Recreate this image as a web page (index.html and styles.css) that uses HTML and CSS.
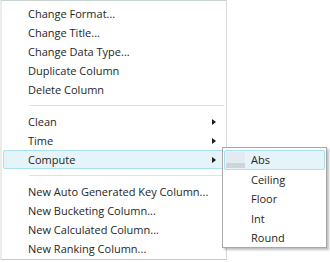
FILE: index.html
```html
<!DOCTYPE html>
<html lang="en">
<head>
    <meta charset="UTF-8">
    <title>Column menu</title>
    <link rel="stylesheet" href="styles.css">
</head>
<body>
    <div class="stage">
        <div class="menu">
            <div class="item">Change Format...</div>
            <div class="item">Change Title...</div>
            <div class="item">Change Data Type...</div>
            <div class="item">Duplicate Column</div>
            <div class="item">Delete Column</div>
            <div class="sep"></div>
            <div class="item has-sub">Clean<span class="arrow"></span></div>
            <div class="item has-sub">Time<span class="arrow"></span></div>
            <div class="item has-sub active">Compute<span class="arrow"></span></div>
            <div class="sep"></div>
            <div class="item">New Auto Generated Key Column...</div>
            <div class="item">New Bucketing Column...</div>
            <div class="item">New Calculated Column...</div>
            <div class="item">New Ranking Column...</div>
        </div>

        <div class="submenu">
            <div class="sub-item active"><span class="icon-slot"></span>Abs</div>
            <div class="sub-item"><span class="icon-slot"></span>Ceiling</div>
            <div class="sub-item"><span class="icon-slot"></span>Floor</div>
            <div class="sub-item"><span class="icon-slot"></span>Int</div>
            <div class="sub-item"><span class="icon-slot"></span>Round</div>
        </div>
    </div>
</body>
</html>
```

FILE: styles.css
```css
body {
    margin: 0;
    background-color: #fff;
    font-family: "Open Sans", "Noto Sans", sans-serif;
    font-size: 11px;
    color: #262626;
}
.stage {
    position: relative;
    width: 330px;
    height: 262px;
}
.menu {
    width: 224px;
    height: 255px;
    padding-top: 3px;
    background-color: #fff;
    border-top: 1px solid #c9d3d0;
    border-right: 1px solid #dadada;
    border-bottom: 1px solid #c8c8c8;
    border-left: 2px solid #ececec;
}
.item {
    position: relative;
    height: 19px;
    line-height: 19px;
    padding-left: 25px;
    margin: 0 2px 0 1px;
    white-space: nowrap;
}
.item.active {
    background-color: #e5f4f8;
    border: 1px solid #a9dfee;
    border-radius: 2px;
    height: 17px;
    line-height: 17px;
    padding-left: 24px;
}
.arrow {
    position: absolute;
    right: 8px;
    top: 7px;
    width: 0;
    height: 0;
    border-top: 3px solid transparent;
    border-bottom: 3px solid transparent;
    border-left: 4px solid #1b1b1b;
}
.item.active .arrow {
    top: 6px;
    right: 7px;
}
.sep {
    height: 1px;
    margin: 6px 2px 6px 27px;
    background-color: #e2e2e2;
}
.submenu {
    position: absolute;
    left: 222px;
    top: 147px;
    width: 103px;
    height: 97px;
    padding-top: 2px;
    background-color: #fff;
    border: 1px solid #a8a8a8;
    box-shadow: 2px 2px 2px rgba(0, 0, 0, 0.25);
}
.sub-item {
    display: flex;
    align-items: center;
    height: 19.5px;
    margin: 0 2px;
    white-space: nowrap;
}
.sub-item.active {
    background-color: #e5f4f8;
    border: 1px solid #a9dfee;
    border-radius: 2px;
    height: 17.5px;
    margin: 0 1px;
}
.icon-slot {
    width: 18px;
    height: 100%;
    margin-right: 8px;
}
.sub-item.active .icon-slot {
    width: 19px;
    height: 16px;
    margin-left: 1px;
    margin-right: 6px;
    background: linear-gradient(#e3ebf1 0 11px, #cfd4d6 11px);
}
```
